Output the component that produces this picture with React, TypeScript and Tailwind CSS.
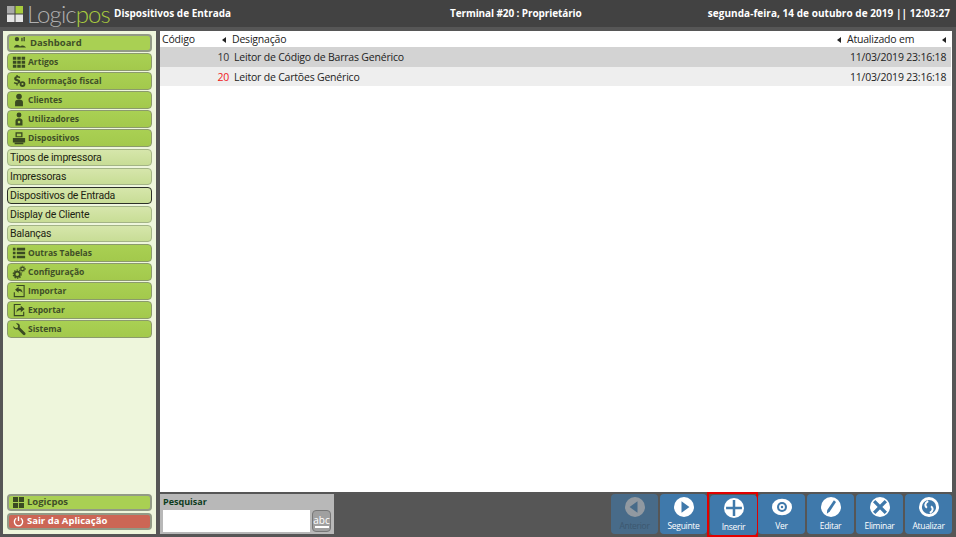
import { ReactNode } from "react";

const uiFont = "[font-family:'Open_Sans',sans-serif]";
const navFont = "[font-family:'Open_Sans',sans-serif]";

const Glyph = ({ children, className = "size-[14px]" }: { children: ReactNode; className?: string }) => (
    <svg viewBox="0 0 16 16" className={`${className} shrink-0`} fill="#3a4a22">
        {children}
    </svg>
);

const PersonIcon = () => (
    <Glyph>
        <circle cx="8" cy="4" r="3.2" />
        <path d="M3.5 15v-4.5C3.5 8.5 5 7.5 8 7.5s4.500 1 4.500 3V15z" />
    </Glyph>
);

const GridIcon = () => (
    <Glyph>
        <path d="M1 2h4v3.500H1zM6 2h4v3.500H6zM11 2h4v3.500h-4zM1 6.500h4V10H1zM6 6.500h4V10H6zM11 6.500h4V10h-4zM1 11h4v3.500H1zM6 11h4v3.500H6zM11 11h4v3.500h-4z" />
    </Glyph>
);

const navTop = [
    { label: "Artigos", icon: <GridIcon /> },
    {
        label: "Informação fiscal",
        icon: (
            <Glyph>
                <path d="M5 1h1.500v1.400c1.400.1 2.500.6 3 1.100l-.8 1.400c-.6-.4-1.500-.8-2.400-.8-.9 0-1.300.3-1.300.7 0 .5.500.7 1.800 1.100 1.800.6 2.700 1.300 2.700 2.700 0 1.300-1 2.300-3 2.500V13H5v-1.300c-1.300-.1-2.400-.6-3-1.100l.8-1.500c.7.5 1.700.9 2.700.9.900 0 1.400-.3 1.400-.8S6.400 8.400 5.200 8C3.500 7.500 2.500 6.700 2.500 5.300c0-1.300 1-2.300 2.500-2.600z" />
                <circle cx="12" cy="11.500" r="3.300" />
                <circle cx="12" cy="11.500" r="1.200" fill="#a5cd4e" />
            </Glyph>
        ),
    },
    { label: "Clientes", icon: <PersonIcon /> },
    {
        label: "Utilizadores",
        icon: (
            <Glyph>
                <circle cx="8" cy="3.500" r="2.800" />
                <path d="M4 15.500V10c0-2 1.500-3 4-3s4 1 4 3v5.500z" />
                <circle cx="8" cy="11.500" r="1.500" fill="#a5cd4e" />
            </Glyph>
        ),
    },
    {
        label: "Dispositivos",
        icon: (
            <Glyph>
                <path d="M4 1.500h8V7H4zM1 8h14v5H1zM3 13.500h10V15H3z" />
                <path d="M5.500 3h5v3h-5z" fill="#a5cd4e" />
            </Glyph>
        ),
    },
];

const navSub = [
    { label: "Tipos de impressora" },
    { label: "Impressoras" },
    { label: "Dispositivos de Entrada", active: true },
    { label: "Display de Cliente" },
    { label: "Balanças" },
];

const navBottom = [
    {
        label: "Outras Tabelas",
        icon: (
            <Glyph>
                <path d="M1 2h3v3H1zM5.500 2H15v3H5.500zM1 6.500h3v3H1zM5.500 6.500H15v3H5.500zM1 11h3v3H1zM5.500 11H15v3H5.500z" />
            </Glyph>
        ),
    },
    {
        label: "Configuração",
        icon: (
            <Glyph>
                <circle cx="6" cy="10.500" r="3" fill="none" stroke="#3a4a22" strokeWidth="2" />
                <circle cx="6" cy="10.500" r="4.600" fill="none" stroke="#3a4a22" strokeWidth="1.400" strokeDasharray="1.600 1.300" />
                <circle cx="12" cy="4.500" r="2" fill="none" stroke="#3a4a22" strokeWidth="1.400" />
                <circle cx="12" cy="4.500" r="3.200" fill="none" stroke="#3a4a22" strokeWidth="1" strokeDasharray="1.200 1.100" />
            </Glyph>
        ),
    },
    {
        label: "Importar",
        icon: (
            <Glyph>
                <path d="M5 1h9.500v14H2V9.500h1.300v4.200h9.900V2.300H5z" />
                <path d="M7.500 3v2.300c3 0 4.500 1.700 4.500 5-1-1.800-2.300-2.400-4.500-2.400V10L3.500 6.500z" />
            </Glyph>
        ),
    },
    {
        label: "Exportar",
        icon: (
            <Glyph>
                <path d="M2 1h8v1.300H3.300v11.400h9.400V10H14v5H2z" />
                <path d="M10 3v2.300C7 5.300 5 7 5 11c1-2 2.800-3 5-3v2.500l4.500-3.700z" />
            </Glyph>
        ),
    },
    {
        label: "Sistema",
        icon: (
            <Glyph>
                <path d="M1.500 4.500 4 7l2.500-.5L7 4 4.500 1.500C6.500.8 9 2 9 4.500c0 .6-.1 1-.3 1.500l6.300 6.300c.7.700.7 1.600 0 2.300s-1.600.7-2.300 0L6.400 8.300C3.800 9.300 1 7.300 1.500 4.500z" />
            </Glyph>
        ),
    },
];

const NavButton = ({ label, icon }: { label: string; icon: ReactNode }) => (
    <div className="h-[18px] flex items-center rounded-[4px] border border-[#8b9a6c] bg-gradient-to-b from-[#a9d053] to-[#a3c94c] pl-[4px]">
        <span className="w-[13px] flex justify-center">{icon}</span>
        <span className={`ml-[3px] text-[8.500px] font-bold text-[#3f4f28] whitespace-nowrap ${navFont}`}>{label}</span>
    </div>
);

const SubButton = ({ label, active }: { label: string; active?: boolean }) => (
    <div
        className={`h-[17px] mb-[1px] pt-[1px] flex items-center rounded-[4px] border bg-gradient-to-b from-[#d6e6ab] to-[#c8dd96] pl-[2px] text-[10.500px] tracking-[-0.2px] text-[#1d2412] whitespace-nowrap [font-family:'Roboto',sans-serif] ${
            active ? "border-[#2c3028]" : "border-[#a3b486]"
        }`}
    >
        {label}
    </div>
);

const Sidebar = () => (
    <aside className="w-[153px] ml-[3px] flex flex-col bg-[#eef6dc] px-[4px] pt-[3px] pb-[4px]">
        <div className="flex flex-col gap-[1px]">
            <div className="h-[18px] flex items-center rounded-[4px] border-2 border-[#929a86] bg-[#a9d053] pl-[4px]">
                <span className="w-[14px] flex justify-center">
                    <Glyph>
                        <circle cx="4.500" cy="3.500" r="2.500" />
                        <path d="M9.500 2h1.500v4H9.500zM12 1h1.500v5H12zM1 13c1-2 2-3 3.500-3s2.500 1 3.500 2c1-1 2.500-1.500 4-1s2 1 3 2z" />
                    </Glyph>
                </span>
                <span className={`ml-[3px] text-[9.500px] font-bold text-[#3f4f28] ${navFont}`}>Dashboard</span>
            </div>
            {navTop.map((item) => (
                <NavButton key={item.label} {...item} />
            ))}
            <div className="mt-[1px] flex flex-col gap-[1px]">
                {navSub.map((item) => (
                    <SubButton key={item.label} {...item} />
                ))}
            </div>
            {navBottom.map((item) => (
                <NavButton key={item.label} {...item} />
            ))}
        </div>

        <div className="mt-auto flex flex-col gap-[2px]">
            <div className="h-[17px] flex items-center rounded-[4px] border-2 border-[#929a86] bg-[#a9d053] pl-[4px]">
                <svg viewBox="0 0 12 12" className="size-[11px]" fill="#3a4a22">
                    <path d="M0 0h5.500v5.500H0zM6.500 0H12v5.500H6.500zM0 6.500h5.500V12H0zM6.500 6.500H12V12H6.500z" />
                </svg>
                <span className={`ml-[3px] text-[9.500px] font-bold text-[#3f4f28] ${navFont}`}>Logicpos</span>
            </div>
            <div className="h-[17px] flex items-center rounded-[4px] border-2 border-[#929a86] bg-[#cc6655] pl-[4px]">
                <svg viewBox="0 0 12 12" className="size-[11px]" fill="none" stroke="#fff" strokeWidth="1.500">
                    <path d="M3.500 2.500a4.500 4.500 0 1 0 5 0M6 .5v5" />
                </svg>
                <span className={`ml-[3px] text-[9.500px] font-bold text-white ${navFont}`}>Sair da Aplicação</span>
            </div>
        </div>
    </aside>
);

const tableRows = [
    { code: "10", name: "Leitor de Código de Barras Genérico", updated: "11/03/2019 23:16:18", box: "h-[20px] pt-[1px] bg-[#d3d3d3]", codeColor: "text-[#333333]" },
    { code: "20", name: "Leitor de Cartões Genérico", updated: "11/03/2019 23:16:18", box: "h-[19px] pt-[2px] bg-[#eeeeee]", codeColor: "text-[#f02020]" },
];

const SortArrow = () => <span className="w-0 h-0 border-y-[3px] border-y-transparent border-r-[4px] border-r-[#222222]" />;

const DataTable = () => (
    <div className={`flex-1 bg-white text-[10.500px] tracking-[-0.2px] text-[#222222] ${uiFont}`}>
        <div className="h-[16px] pt-[1px] flex items-center">
            <div className="w-[67px] flex items-center justify-between pl-[2px] pr-[1px]">
                Código
                <SortArrow />
            </div>
            <div className="flex-1 flex items-center justify-between pl-[5px] pr-[3px]">
                Designação
                <SortArrow />
            </div>
            <div className="w-[108px] flex items-center justify-between pl-[3px] pr-[6px] whitespace-nowrap">
                Atualizado em
                <SortArrow />
            </div>
        </div>
        {tableRows.map((row) => (
            <div key={row.code} className={`mr-[1px] flex items-center whitespace-nowrap ${row.box}`}>
                <div className={`w-[69px] text-right ${row.codeColor}`}>{row.code}</div>
                <div className="flex-1 pl-[5px]">{row.name}</div>
                <div className="w-[104px] pl-[3px]">{row.updated}</div>
            </div>
        ))}
    </div>
);

const white = "#ffffff";
const blue = "#3f79ab";

const toolbar = [
    {
        label: "Anterior",
        disabled: true,
        icon: <path d="M15 5v14L5.500 12z" fill={blue} />,
    },
    {
        label: "Seguinte",
        icon: <path d="M9 5v14l9.500-7z" fill={blue} />,
    },
    {
        label: "Inserir",
        selected: true,
        icon: <path d="M10.500 2.500h3v8h8v3h-8v8h-3v-8h-8v-3h8z" fill={blue} />,
    },
    {
        label: "Ver",
        eye: true,
        icon: null,
    },
    {
        label: "Editar",
        icon: <path d="M15.500 4 18 6l-7.500 11.500-3.500 2.500.5-4.500z" fill={blue} />,
    },
    {
        label: "Eliminar",
        icon: <path d="M5 5 19 19M19 5 5 19" fill="none" stroke={blue} strokeWidth="4" />,
    },
    {
        label: "Atualizar",
        icon: (
            <>
                <circle cx="12" cy="12" r="8.500" fill={blue} />
                <path d="M10.500 3.500c-5 4-3 8 .5 8.500 3 .5 4 5-.5 8.500 7 .5 11-5.500 8.500-11-1.500-3-4.500-5.500-8.500-6z" fill="none" />
                <path d="M11 5c-4.500 2.500-4 6-1.500 8M13 19c4.500-2.500 4-6 1.500-8" fill="none" stroke={white} strokeWidth="2.400" />
            </>
        ),
    },
];

const ToolButton = ({ label, icon, disabled, selected, eye }: { label: string; icon: ReactNode; disabled?: boolean; selected?: boolean; eye?: boolean }) => {
    const button = (
        <div className={`w-[47px] h-[40px] flex flex-col items-center rounded-[4px] bg-[#3f79ab] pt-[3px] ${disabled ? "opacity-60" : ""}`}>
            <svg viewBox="0 0 24 24" className="size-[20px]">
                {eye ? (
                    <>
                        <ellipse cx="12" cy="12" rx="12" ry="10" fill={white} />
                        <circle cx="12" cy="12" r="6" fill={blue} />
                        <circle cx="12" cy="12" r="3.500" fill={white} />
                        <circle cx="12" cy="12" r="1.500" fill={blue} />
                    </>
                ) : (
                    <>
                        <circle cx="12" cy="12" r="12" fill={disabled ? "#b9c7d3" : white} />
                        {icon}
                    </>
                )}
            </svg>
            <span className={`mt-[3px] text-[8.500px] leading-[12px] tracking-[-0.3px] ${uiFont} ${disabled ? "text-[#2c5a82]" : "text-white"}`}>{label}</span>
        </div>
    );

    if (selected) {
        return <div className="relative z-10 -my-[2px] -mx-[2px] border-[2px] border-[#e00000] px-[1px] py-[1px] h-[45px] w-[51px] box-border">{button}</div>;
    }
    return button;
};

export default function App() {
    return (
        <div className="w-[956px] h-[537px] flex flex-col bg-[#565656] overflow-hidden">
            <header className="h-[27px] mb-[4px] flex items-center bg-[#424242] text-white text-[10px] font-bold">
                <div className="w-[340px] flex items-center pl-[7px]">
                    <svg viewBox="0 0 16 16" className="size-[16px]">
                        <path d="M0 0h7.500v7.500H0z" fill="#a8a8a8" />
                        <path d="M8.500 0H16v7.500H8.500z" fill="#a9cc3e" />
                        <path d="M0 8.500h7.500V16H0zM8.500 8.500H16V16H8.500z" fill="#e4e4e4" />
                    </svg>
                    <span className="ml-[4px] w-[87px] text-[24px] font-light leading-none tracking-[-0.9px] text-[#b0b0b0] [font-family:'Lato',sans-serif]">
                        Logic<span className="text-[#a9cc3e]">pos</span>
                    </span>
                    <span className={`whitespace-nowrap ${uiFont}`}>Dispositivos de Entrada</span>
                </div>
                <div className={`ml-[110px] whitespace-nowrap tracking-[-0.1px] ${uiFont}`}>Terminal #20 : Proprietário</div>
                <div className={`ml-auto pr-[6px] whitespace-nowrap tracking-[0.04px] ${uiFont}`}>segunda-feira, 14 de outubro de 2019 || 12:03:27</div>
            </header>

            <div className="flex-1 flex min-h-0 pb-[3px]">
                <Sidebar />

                <main className="flex-1 ml-[4px] mr-[4px] flex flex-col">
                    <DataTable />

                    <div className="h-[40px] mt-[2px] flex items-start justify-between">
                        <div className="w-[174px] h-[40px] bg-[#b8b8b8] px-[3px] pt-[1px]">
                            <div className={`text-[9px] leading-[13px] font-bold text-[#0d3d1e] ${navFont}`}>Pesquisar</div>
                            <div className="mt-[2px] flex gap-[2px]">
                                <div className="w-[147px] h-[22px] bg-white" />
                                <div className="w-[19px] h-[22px] flex flex-col items-center justify-center rounded-[4px] border border-[#777777] bg-[#a0a0a0]">
                                    <span className={`text-[10px] leading-[10px] text-white ${uiFont}`}>abc</span>
                                    <span className="w-[14px] h-[2px] mt-[1px] bg-white" />
                                </div>
                            </div>
                        </div>

                        <div className="flex gap-[2px]">
                            {toolbar.map((item) => (
                                <ToolButton key={item.label} {...item} />
                            ))}
                        </div>
                    </div>
                </main>
            </div>
        </div>
    );
}
